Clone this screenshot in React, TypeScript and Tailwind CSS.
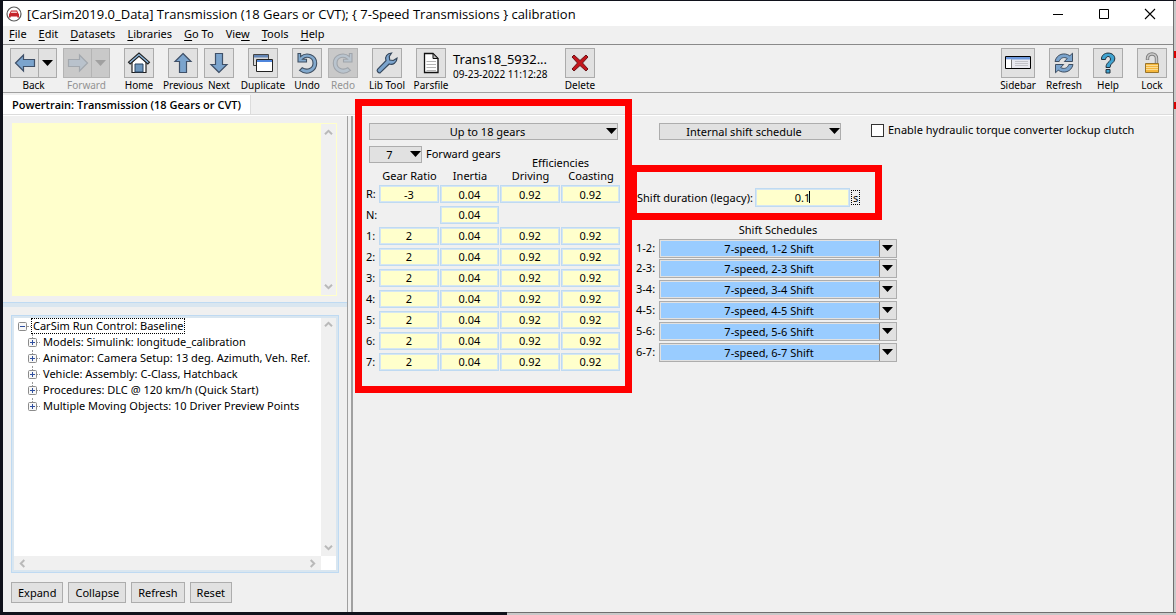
import React, { useState } from "react";
import type { ReactNode } from "react";

const FONT = "font-['Noto_Sans','Open_Sans',sans-serif]";

function Arrow({ rotate, muted = false }: { rotate: number; muted?: boolean }) {
  return (
    <svg width="24" height="24" viewBox="0 0 24 24" aria-hidden="true">
      <path
        d="M2.5 12 10.5 4 10.5 8.5 21.5 8.5 21.5 15.5 10.5 15.5 10.5 20Z"
        transform={`rotate(${rotate} 12 12)`}
        fill={muted ? "#b9c2cc" : "#7ba4cd"}
        stroke={muted ? "#a3a8ae" : "#3f5068"}
        strokeWidth="1.2"
      />
    </svg>
  );
}

function Caret({ color = "#000000" }: { color?: string }) {
  return (
    <svg width="11" height="6" viewBox="0 0 11 6" aria-hidden="true">
      <path d="M0 0H11L5.5 6Z" fill={color} />
    </svg>
  );
}

function HomeIcon() {
  return (
    <svg width="24" height="24" viewBox="0 0 24 24" aria-hidden="true">
      <path d="M5 11 12 5 19 11V21.5H5Z" fill="#fff" stroke="#222" strokeWidth="1.2" />
      <path d="M8 13H16V21H8Z" fill="#6d96bd" stroke="#2b4560" strokeWidth="1" />
      <path d="M1.5 11.2 12 2 22.5 11.2 20.8 13 12 5.2 3.2 13Z" fill="#8fb8dd" stroke="#222" strokeWidth="1.1" />
    </svg>
  );
}

function DuplicateIcon() {
  return (
    <svg width="24" height="24" viewBox="0 0 24 24" aria-hidden="true">
      <path d="M2.5 3.5H17.500V14.500H2.500Z" fill="#d8d8d8" stroke="#444" />
      <path d="M3 4H17V6.500H3Z" fill="#6285b5" />
      <path d="M5.500 8.500H21.500V20.500H5.500Z" fill="#fff" stroke="#222" />
      <path d="M6 9H21V11H6Z" fill="#4f86dc" />
    </svg>
  );
}

function UndoIcon({ muted = false }: { muted?: boolean }) {
  return (
    <svg width="24" height="24" viewBox="0 0 24 24" aria-hidden="true">
      <g transform={muted ? "translate(24 0) scale(-1 1)" : undefined}>
        <path
          d="M3 2.5V11H11.5V8.2H7.6C11 4.6 18 6 18 12.2 18 17 12.5 20 7.2 16.8L4.5 19.4C12 25.500 21.700 20.500 21.700 12.300 21.700 3.600 11.500 .5 5.600 5.500V2.500Z"
          fill={muted ? "#b9c4ce" : "#82a9cd"}
          stroke={muted ? "#a0a5ab" : "#3f4f62"}
          strokeWidth="1.1"
        />
      </g>
    </svg>
  );
}

function WrenchIcon() {
  return (
    <svg width="24" height="24" viewBox="0 0 24 24" aria-hidden="true">
      <path
        d="M16.600 2C12 2.200 9.600 6 11 9.600L2.500 18.300C1.300 20 3.700 22.800 5.600 21.400L14.200 13C18 14.200 21.800 11.800 22 7.200L18.300 9.500 14.700 9 14.300 5.500Z"
        fill="#7ba4cd"
        stroke="#35475c"
        strokeWidth="1.2"
      />
    </svg>
  );
}

function PageIcon() {
  return (
    <svg width="24" height="24" viewBox="0 0 24 24" aria-hidden="true">
      <path d="M5.500 2.500H14L19 7.500V21.500H5.500Z" fill="#fff" stroke="#111" strokeWidth="1.300" />
      <path d="M14 2.500V7.500H19Z" fill="#bbb" stroke="#111" />
      <path d="M7.500 10.500H17M7.500 13.500H17M7.500 16.500H17M7.500 19.500H17" stroke="#b5b5b5" />
    </svg>
  );
}

function DeleteIcon() {
  return (
    <svg width="24" height="24" viewBox="0 0 24 24" aria-hidden="true">
      <path
        d="M6 4 12 9.500 18 4 20 6 14.500 12 20 18 18 20 12 14.500 6 20 4 18 9.500 12 4 6Z"
        fill="#c4161c"
        stroke="#6b1215"
        strokeWidth="1"
      />
    </svg>
  );
}

function SidebarIcon() {
  return (
    <svg width="28" height="24" viewBox="0 0 28 24" aria-hidden="true">
      <path d="M1.500 5.500H26.500V17.500H1.500Z" fill="#e9e9ef" stroke="#000" />
      <path d="M2 6H26V8.500H2Z" fill="#6f9ade" />
      <path d="M2 8.500H7V17H2Z" fill="#fff" />
      <path d="M7.500 8.500V17" stroke="#777" />
      <path d="M11 10.500H24M11 12.500H24M11 14.500H24" stroke="#c4c4c9" />
    </svg>
  );
}

function RefreshIcon() {
  return (
    <svg width="24" height="24" viewBox="0 0 24 24" aria-hidden="true">
      <g fill="#7ba4cd" stroke="#3f4f62" strokeWidth="1">
        <path d="M3 10.500C4.500 3 12.500 1 17.800 4.800L20.500 2.200V10.500H12.300L15.300 7.500C12 5.500 8.300 6.800 7.200 10.500Z" />
        <path d="M21 13.500C19.500 21 11.500 23 6.200 19.200L3.500 21.800V13.500H11.700L8.700 16.500C12 18.500 15.700 17.200 16.800 13.500Z" />
      </g>
    </svg>
  );
}

function HelpIcon() {
  return (
    <svg width="24" height="24" viewBox="0 0 24 24" aria-hidden="true">
      <g fill="#3fa3d0" stroke="#23313d" strokeWidth="1">
        <path d="M5.500 8.500C5 0 19 0 18.800 8 18.700 12 14 12 14 16.500H10C10 11 14.500 11 14.500 8 14.500 4.500 9.700 4.700 9.500 8.500Z" />
        <path d="M10 18.500H14V22H10Z" />
      </g>
    </svg>
  );
}

function LockIcon() {
  return (
    <svg width="24" height="24" viewBox="0 0 24 24" aria-hidden="true">
      <path d="M7.500 9V7.500C7.500 1.500 16.500 1.500 16.500 7.500V12" fill="none" stroke="#7d7d7d" strokeWidth="3.400" />
      <path d="M7.500 8.500V7.500C7.500 1.500 16.500 1.500 16.500 7.500V12" fill="none" stroke="#c9c9c9" strokeWidth="1.600" />
      <path d="M5.500 12.500H18.500V21.500H5.500Z" fill="#f5b73c" stroke="#98742c" />
      <path d="M6 14.500H18M6 16.500H18M6 18.500H18" stroke="#fbdc94" />
    </svg>
  );
}

function CarLogo() {
  return (
    <svg width="16" height="16" viewBox="0 0 16 16" aria-hidden="true">
      <circle cx="8" cy="8" r="7" fill="#fff" stroke="#5a5a5a" strokeWidth="1.200" />
      <path d="M5 4.500H11L12.300 7.300 13 8.200V11.500H11.300V10.500H4.700V11.500H3V8.200L3.700 7.300Z" fill="#c5252b" />
      <path d="M5.500 5.400H10.500L11.200 7H4.800Z" fill="#f2c9c9" />
    </svg>
  );
}

function Tool({
  label,
  icon,
  disabled = false,
  split = false,
  width = "w-[30px]",
}: {
  label: string;
  icon: ReactNode;
  disabled?: boolean;
  split?: boolean;
  width?: string;
}) {
  const box = disabled ? "border-[#b4b4b4] bg-[#c9c9c9]" : "border-[#ababab] bg-[#e1e1e1]";
  return (
    <div className={`flex shrink-0 flex-col items-center ${split ? "w-[47px]" : width}`}>
      <div className="flex w-full">
        <button
          type="button"
          disabled={disabled}
          aria-label={label}
          className={`flex h-[30px] flex-1 items-center justify-center border ${box}`}
        >
          {icon}
        </button>
        {split && (
          <button
            type="button"
            disabled={disabled}
            aria-label={`${label} history`}
            className={`flex h-[30px] w-[18px] items-center justify-center border border-l-0 ${box}`}
          >
            <Caret color={disabled ? "#a0a0a0" : "#000000"} />
          </button>
        )}
      </div>
      <span className={`text-[10px] leading-[14px] whitespace-nowrap ${disabled ? "text-[#939393]" : "text-black"}`}>
        {label}
      </span>
    </div>
  );
}

function Chevron({ rotate }: { rotate: number }) {
  return (
    <svg width="9" height="9" viewBox="0 0 9 9" aria-hidden="true">
      <path d="M1 6.300 4.500 2.800 8 6.300" transform={`rotate(${rotate} 4.500 4.500)`} fill="none" stroke="#b9b9b9" strokeWidth="2" />
    </svg>
  );
}

function VScroll() {
  return (
    <div className="flex w-[15px] shrink-0 flex-col items-center justify-between bg-[#f0f0f0] py-1">
      <Chevron rotate={0} />
      <Chevron rotate={180} />
    </div>
  );
}

function Dropdown({ label, value, width }: { label: string; value: string; width: string }) {
  return (
    <div className={`relative shrink-0 ${width}`}>
      <select
        aria-label={label}
        className="block h-[17px] w-full appearance-none border border-[#adadad] bg-[#e1e1e1] pr-3 text-center text-[11px] leading-[15px] [text-align-last:center]"
      >
        <option>{value}</option>
      </select>
      <span className="pointer-events-none absolute top-[5px] right-px">
        <Caret />
      </span>
    </div>
  );
}

function ScheduleSelect({ id, value }: { id: string; value: string }) {
  return (
    <div className="relative w-[238px] shrink-0">
      <select
        id={id}
        className="block h-[19px] w-full appearance-none border border-[#adadad] bg-[#99ccff] pr-[18px] text-center text-[11px] leading-[17px] outline outline-1 -outline-offset-2 outline-[#e1e1e1] [text-align-last:center]"
      >
        <option>{value}</option>
      </select>
      <span className="pointer-events-none absolute top-px right-px flex h-[17px] w-[17px] border-l border-[#8a8a8a] bg-[#e1e1e1] pt-[5px] pl-[2px]">
        <Caret />
      </span>
    </div>
  );
}

function Field({ label, initial }: { label: string; initial: string }) {
  const [value, setValue] = useState(initial);
  return (
    <input
      aria-label={label}
      value={value}
      onChange={(e) => setValue(e.target.value)}
      className="block h-[18px] w-full border border-[#bfdaf2] bg-[#ffffcc] text-center text-[11px] leading-4 outline outline-1 -outline-offset-2 outline-[#d5e6f2]"
    />
  );
}

const MENU = [
  ["", "F", "ile"],
  ["", "E", "dit"],
  ["", "D", "atasets"],
  ["", "L", "ibraries"],
  ["", "G", "o To"],
  ["Vie", "w", ""],
  ["", "T", "ools"],
  ["", "H", "elp"],
];

const COLUMNS = ["Gear Ratio", "Inertia", "Driving", "Coasting"];

const GEARS: { name: string; values: (string | null)[] }[] = [
  { name: "R:", values: ["-3", "0.04", "0.92", "0.92"] },
  { name: "N:", values: [null, "0.04", null, null] },
  ...["1:", "2:", "3:", "4:", "5:", "6:", "7:"].map((name) => ({
    name,
    values: ["2", "0.04", "0.92", "0.92"],
  })),
];

const SHIFTS = ["1-2", "2-3", "3-4", "4-5", "5-6", "6-7"];

const TREE = [
  "Models: Simulink: longitude_calibration",
  "Animator: Camera Setup: 13 deg. Azimuth, Veh. Ref.",
  "Vehicle: Assembly: C-Class, Hatchback",
  "Procedures: DLC @ 120 km/h (Quick Start)",
  "Multiple Moving Objects: 10 Driver Preview Points",
];

function Expander({ open, label }: { open: boolean; label: string }) {
  return (
    <button type="button" aria-label={`${open ? "Collapse" : "Expand"} ${label}`} className="shrink-0">
      <svg width="9" height="9" viewBox="0 0 9 9" aria-hidden="true">
        <rect x=".5" y=".5" width="8" height="8" rx="1" fill="#f7f7f7" stroke="#8b8b8b" />
        <path d={open ? "M2 4.500H7" : "M2 4.500H7M4.500 2V7"} stroke="#2f4f9f" />
      </svg>
    </button>
  );
}

function Sidebar() {
  return (
    <aside className="flex w-[345px] shrink-0 flex-col border-r border-[#a0a0a0]">
      <div className="mt-[7px] mr-[10px] ml-[9px] flex h-[173px] border border-[#ffffcc] bg-[#ffffcc]">
        <textarea aria-label="Notes" className="flex-1 resize-none bg-[#ffffcc] text-[11px] outline-none" />
        <VScroll />
      </div>
      <div className="mt-[6px] h-[5px] border-t border-[#bfdaf2] bg-[#d9e6f0]" />
      <div className="mt-2 mr-2 ml-2 flex flex-1 flex-col border border-[#bfdaf2] bg-white outline outline-2 -outline-offset-3 outline-[#d9e6f0]">
        <div className="flex flex-1">
          <div className="flex-1 pt-[2px] pl-[6px] text-[11px] leading-4">
            <div className="flex h-4 items-center">
              <Expander open label="CarSim Run Control" />
              <span className="w-1 border-t border-dotted border-[#999]" />
              <span className="border border-dotted border-black px-px leading-[14px]">CarSim Run Control: Baseline</span>
            </div>
            <ul className="ml-[10px]">
              {TREE.map((item) => (
                <li key={item} className="flex h-4 items-center whitespace-nowrap">
                  <span className="flex h-4 flex-col items-center">
                    <span className="h-1 border-l border-dotted border-[#999]" />
                    <Expander open={false} label={item} />
                  </span>
                  <span className="mr-[3px] w-[3px] border-t border-dotted border-[#999]" />
                  {item}
                </li>
              ))}
            </ul>
          </div>
          <div className="mr-[2px] flex">
            <VScroll />
          </div>
        </div>
        <div className="mr-[17px] mb-px ml-[2px] flex h-[15px] items-center justify-between bg-[#f0f0f0] px-1">
          <Chevron rotate={-90} />
          <Chevron rotate={90} />
        </div>
      </div>
      <div className="mt-[9px] mb-[9px] ml-2 flex gap-[5px]">
        {["Expand", "Collapse", "Refresh", "Reset"].map((name) => (
          <button
            key={name}
            type="button"
            className="h-[21px] border border-[#adadad] bg-[#e1e1e1] px-[6px] text-[11px] leading-[19px]"
          >
            {name}
          </button>
        ))}
      </div>
    </aside>
  );
}

function GearPanel() {
  return (
    <section className="relative w-[257px] shrink-0">
      <div className="pl-[3px]">
        <Dropdown label="Gear range" value="Up to 18 gears" width="w-[249px]" />
      </div>
      <div className="mt-[6px] flex h-[17px] items-center gap-1 pl-[3px]">
        <Dropdown label="Forward gears" value="7" width="w-[53px]" />
        <span>Forward gears</span>
      </div>
      <table className="-mt-[7px] table-fixed border-collapse">
        <colgroup>
          <col className="w-[13px]" />
          <col className="w-[61px]" />
          <col className="w-[60px]" />
          <col className="w-[61px]" />
          <col className="w-[60px]" />
        </colgroup>
        <thead className="leading-[13px]">
          <tr>
            <td colSpan={3} />
            <th colSpan={2} className="h-[13px] p-0 font-normal">
              Efficiencies
            </th>
          </tr>
          <tr>
            <td />
            {COLUMNS.map((name) => (
              <th key={name} className="h-[15px] p-0 align-top font-normal whitespace-nowrap">
                {name}
              </th>
            ))}
          </tr>
        </thead>
        <tbody className="leading-4">
          {GEARS.map((gear) => (
            <tr key={gear.name} className="h-[21px] first:h-5">
              <th className="p-0 text-left font-normal">{gear.name}</th>
              {gear.values.map((value, i) => (
                <td key={COLUMNS[i]} className="py-0 pr-px pl-0">
                  {value !== null && <Field label={`${gear.name} ${COLUMNS[i]}`} initial={value} />}
                </td>
              ))}
            </tr>
          ))}
        </tbody>
      </table>
      <div className="pointer-events-none absolute -top-6 -left-[11px] h-[294px] w-[277px] border-[7px] border-[#ff0000]" />
    </section>
  );
}

function ShiftPanel() {
  return (
    <section className="relative">
      <div className="flex items-start">
        <div className="pl-[23px]">
          <Dropdown label="Shift schedule" value="Internal shift schedule" width="w-[182px]" />
        </div>
        <label className="ml-[30px] flex h-[14px] items-center gap-1 whitespace-nowrap">
          <input type="checkbox" className="size-[13px] appearance-none border border-[#333] bg-white" />
          Enable hydraulic torque converter lockup clutch
        </label>
      </div>
      <div className="mt-12 flex h-[19px] items-center pl-px">
        <label htmlFor="duration" className="w-[118px] pt-px whitespace-nowrap">
          Shift duration (legacy):
        </label>
        <div className="relative w-[95px]">
          <input
            id="duration"
            defaultValue="0.1"
            className="block h-[19px] w-full border border-[#bfdaf2] bg-[#ffffcc] text-center text-[11px] leading-4 outline outline-1 -outline-offset-2 outline-[#d5e6f2]"
          />
          <span className="absolute top-[3px] left-[54px] h-3 w-px bg-black" />
        </div>
        <span className="ml-px border border-dotted border-black px-px leading-[13px]">s</span>
      </div>
      <h2 className="mt-4 ml-[23px] w-[238px] text-center leading-[14px]">Shift Schedules</h2>
      <div className="mt-px flex flex-col">
        {SHIFTS.map((shift) => (
          <div key={shift} className="flex h-[21px] items-center first:h-5">
            <label htmlFor={`shift-${shift}`} className="w-[23px]">
              {shift}:
            </label>
            <ScheduleSelect id={`shift-${shift}`} value={`7-speed, ${shift} Shift`} />
          </div>
        ))}
      </div>
      <div className="pointer-events-none absolute top-[42px] -left-[11px] h-[55px] w-[257px] border-[7px] border-l-[12px] border-[#ff0000]" />
    </section>
  );
}

export default function App() {
  return (
    <div className={`flex min-h-screen flex-col bg-[#10121b] pt-px pl-[3px] text-[11px] text-black ${FONT}`}>
      <div className="flex flex-1">
        <div className="flex min-w-0 flex-1 flex-col bg-[#f0f0f0]">
          <header className="flex h-[25px] items-center bg-white pl-[3px]">
            <CarLogo />
            <h1 className="ml-[5px] flex-1 font-['Open_Sans','Noto_Sans',sans-serif] text-[13px] leading-5 whitespace-nowrap">
              [CarSim2019.0_Data] Transmission (18 Gears or CVT); {"{ 7-Speed Transmissions }"} calibration
            </h1>
            <div className="flex items-center gap-[34px] pr-[17px]">
              <button type="button" aria-label="Minimize">
                <svg width="12" height="12" viewBox="0 0 12 12"><path d="M1 6.500H11" stroke="#000" /></svg>
              </button>
              <button type="button" aria-label="Maximize">
                <svg width="12" height="12" viewBox="0 0 12 12"><path d="M1.500 1.500H10.500V10.500H1.500Z" fill="none" stroke="#000" /></svg>
              </button>
              <button type="button" aria-label="Close">
                <svg width="12" height="12" viewBox="0 0 12 12"><path d="M1 1 11 11M11 1 1 11" stroke="#000" strokeWidth="1.100" /></svg>
              </button>
            </div>
          </header>
          <nav className="flex h-[19px] items-start gap-3 border-b border-[#8a8a8a] pl-[6px] text-[11px] leading-4">
            {MENU.map(([before, key, after]) => (
              <button key={before + key + after} type="button">
                {before}
                <span className="underline underline-offset-2">{key}</span>
                {after}
              </button>
            ))}
          </nav>
          <div className="flex h-12 items-start border-b border-[#a0a0a0] pt-[3px] pr-[6px] pl-[7px]">
            <div className="flex gap-[6px]">
              <Tool label="Back" icon={<Arrow rotate={0} />} split />
              <Tool label="Forward" icon={<Arrow rotate={180} muted />} split disabled />
            </div>
            <div className="ml-[14px] flex gap-[14px]">
              <Tool label="Home" icon={<HomeIcon />} />
              <div className="flex gap-[6px]">
                <Tool label="Previous" icon={<Arrow rotate={90} />} />
                <Tool label="Next" icon={<Arrow rotate={-90} />} />
              </div>
              <Tool label="Duplicate" icon={<DuplicateIcon />} />
              <div className="flex gap-[6px]">
                <Tool label="Undo" icon={<UndoIcon />} />
                <Tool label="Redo" icon={<UndoIcon muted />} disabled />
              </div>
              <Tool label="Lib Tool" icon={<WrenchIcon />} />
              <Tool label="Parsfile" icon={<PageIcon />} />
            </div>
            <div className="ml-[7px] w-28 whitespace-nowrap">
              <p className="pt-[2px] text-[13px] leading-[18px]">Trans18_5932...</p>
              <p className="text-[10px] leading-3">09-23-2022 11:12:28</p>
            </div>
            <Tool label="Delete" icon={<DeleteIcon />} />
            <div className="ml-auto flex gap-[14px]">
              <Tool label="Sidebar" icon={<SidebarIcon />} width="w-[34px]" />
              <Tool label="Refresh" icon={<RefreshIcon />} />
              <Tool label="Help" icon={<HelpIcon />} />
              <Tool label="Lock" icon={<LockIcon />} />
            </div>
          </div>
          <div className="flex h-[22px] items-end border-b border-[#dcdcdc] pt-[2px]">
            <button type="button" className="h-full border-r border-[#dcdcdc] bg-white pt-px pr-[9px] pl-[9px] font-['Open_Sans','Noto_Sans',sans-serif] text-[11px] font-semibold whitespace-nowrap">
              Powertrain: Transmission (18 Gears or CVT)
            </button>
          </div>
          <main className="flex flex-1 border-t border-white">
            <Sidebar />
            <div className="ml-[3px] flex flex-1 items-start gap-[13px] border-l-2 border-[#a0a0a0] pt-[7px] pl-[13px]">
              <GearPanel />
              <ShiftPanel />
            </div>
          </main>
        </div>
        <div className="flex w-[3px] flex-col border-l border-[#6f6f6f] bg-[#c9c9c9]">
          <span className="mt-[50px] h-[7px] bg-[#d90000]" />
          <span className="mt-[44px] h-[7px] bg-[#d90000]" />
        </div>
      </div>
      <div className="flex h-[3px]">
        <div className="w-[504px]" />
        <div className="flex-1 border-t border-[#6f6f6f] bg-[#c9c9c9]" />
      </div>
    </div>
  );
}
